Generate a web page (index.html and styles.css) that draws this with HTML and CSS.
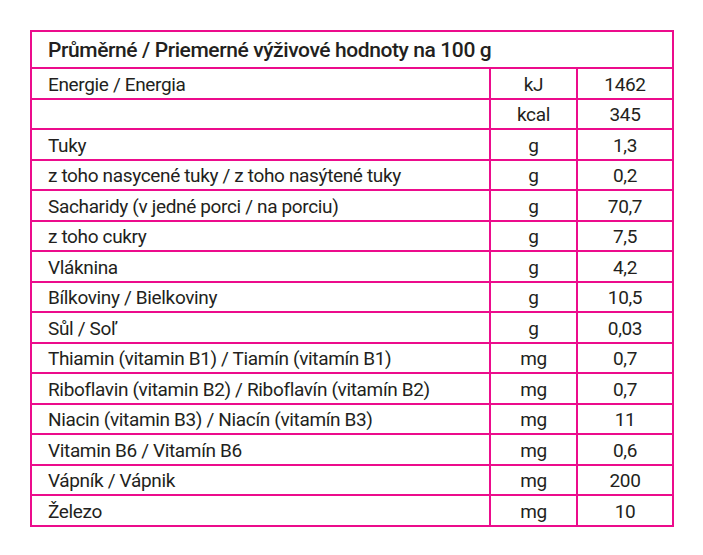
FILE: index.html
```html
<!DOCTYPE html>
<html lang="cs">
<head>
<meta charset="utf-8">
<title>Výživové hodnoty</title>
<link rel="stylesheet" href="styles.css">
</head>
<body>
<table class="nutri">
  <colgroup>
    <col class="c-name">
    <col class="c-unit">
    <col class="c-val">
  </colgroup>
  <thead>
    <tr class="head"><th colspan="3">Průměrné / Priemerné výživové hodnoty na 100 g</th></tr>
  </thead>
  <tbody>
    <tr><td>Energie / Energia</td><td class="u">kJ</td><td class="v">1462</td></tr>
    <tr><td></td><td class="u">kcal</td><td class="v">345</td></tr>
    <tr><td>Tuky</td><td class="u">g</td><td class="v">1,3</td></tr>
    <tr><td>z toho nasycené tuky / z toho nasýtené tuky</td><td class="u">g</td><td class="v">0,2</td></tr>
    <tr><td>Sacharidy (v jedné porci / na porciu)</td><td class="u">g</td><td class="v">70,7</td></tr>
    <tr><td>z toho cukry</td><td class="u">g</td><td class="v">7,5</td></tr>
    <tr><td>Vláknina</td><td class="u">g</td><td class="v">4,2</td></tr>
    <tr><td>Bílkoviny / Bielkoviny</td><td class="u">g</td><td class="v">10,5</td></tr>
    <tr><td>Sůl / Soľ</td><td class="u">g</td><td class="v">0,03</td></tr>
    <tr><td>Thiamin (vitamin B1) / Tiamín (vitamín B1)</td><td class="u">mg</td><td class="v">0,7</td></tr>
    <tr><td>Riboflavin (vitamin B2) / Riboflavín (vitamín B2)</td><td class="u">mg</td><td class="v">0,7</td></tr>
    <tr><td>Niacin (vitamin B3) / Niacín (vitamín B3)</td><td class="u">mg</td><td class="v">11</td></tr>
    <tr><td>Vitamin B6 / Vitamín B6</td><td class="u">mg</td><td class="v">0,6</td></tr>
    <tr><td>Vápník / Vápnik</td><td class="u">mg</td><td class="v">200</td></tr>
    <tr><td>Železo</td><td class="u">mg</td><td class="v">10</td></tr>
  </tbody>
</table>
</body>
</html>
```
FILE: styles.css
```css
html, body {
  margin: 0;
  padding: 0;
  background: #ffffff;
}
body {
  padding: 30px 0 0 30px;
  font-family: Roboto, "Liberation Sans", sans-serif;
  color: #231f20;
}
.nutri {
  border-collapse: collapse;
  table-layout: fixed;
  width: 642px;
  border: 2px solid #ec0c8c;
}
.c-name { width: 459px; }
.c-unit { width: 87px; }
.c-val { width: 96px; }
.nutri th,
.nutri td {
  border: 2px solid #ec0c8c;
  padding: 0;
  vertical-align: middle;
  white-space: nowrap;
}
.nutri .head th {
  height: 34px;
  padding-top: 1px;
  text-align: left;
  padding-left: 16px;
  font-size: 21px;
  font-weight: 500;
  letter-spacing: -0.4px;
}
.nutri td {
  height: 26.5px;
  padding-top: 2px;
  font-size: 19px;
  font-weight: 400;
  letter-spacing: -0.35px;
  padding-left: 16px;
}
.nutri td.u,
.nutri td.v {
  text-align: center;
  padding-left: 0;
}
```
